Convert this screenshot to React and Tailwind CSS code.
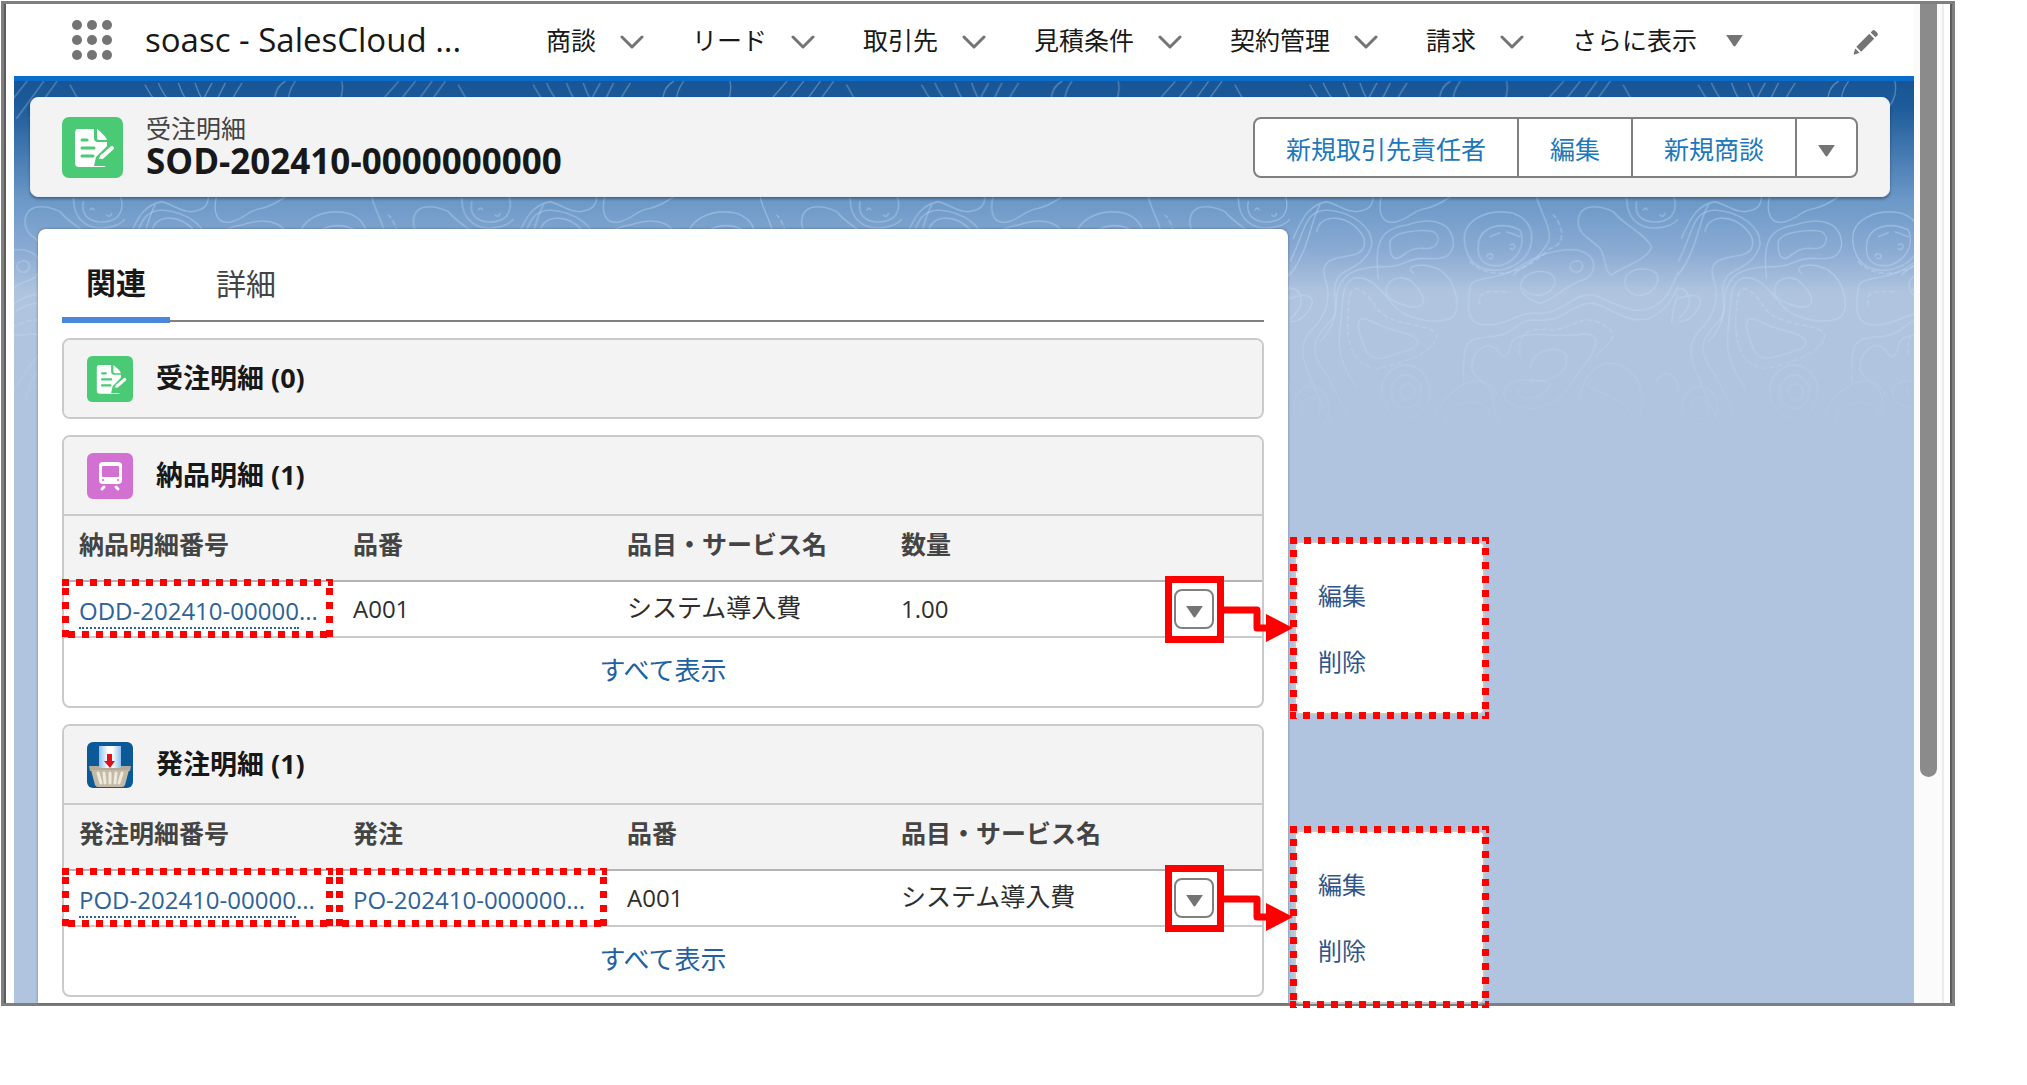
import React from "react";

const NAV_ITEMS = ["商談", "リード", "取引先", "見積条件", "契約管理", "請求"];

function Triangle({ className = "" }) {
  return (
    <svg viewBox="0 0 20 14" className={`h-[13px] w-[19px] shrink-0 fill-[#747474] ${className}`} aria-hidden="true">
      <path d="M1 1h18l-8 12q-1 1-2 0z" />
    </svg>
  );
}

function Chevron() {
  return (
    <svg viewBox="0 0 24 16" className="mt-1 h-4 w-6 fill-none stroke-[#747474]" strokeWidth="3" strokeLinecap="round" strokeLinejoin="round" aria-hidden="true">
      <path d="M2 3l10 10L22 3" />
    </svg>
  );
}

function Waffle() {
  return (
    <svg viewBox="0 0 42 42" className="size-[42px] fill-[#747474]" aria-hidden="true">
      {[6, 21, 36].map((y) => [6, 21, 36].map((x) => <circle key={`${x}-${y}`} cx={x} cy={y} r="5" />))}
    </svg>
  );
}

function Pencil() {
  return (
    <svg viewBox="0 0 28 28" className="size-7 fill-[#747474]" aria-hidden="true">
      <path d="M20.5 2.600q1.200-1.200 2.400 0l2.500 2.500q1.200 1.200 0 2.400l-1.800 1.800-4.900-4.900z" />
      <path d="M17.300 5.800l4.900 4.900L9.200 23.700l-4.900-4.900z" />
      <path d="M3.300 20.500l4.200 4.200-4.800 1.700q-1.300.3-1-1z" />
    </svg>
  );
}

function OrderIcon({ className }) {
  return (
    <svg viewBox="0 0 61 61" className={className} aria-hidden="true">
      <rect width="61" height="61" rx="7" fill="#4bca76" />
      <path
        fill="#fff"
        d="M16 12h16v9q0 4 4 4h9v4L34 40l-2 9h12q-1 1-3 1H17q-4 0-4-4V16q0-4 3-4z"
      />
      <path fill="#fff" d="M35 12q9 7 10 11h-8q-2 0-2-2z" />
      <path d="M20 23h5M20 31h12M20 39h11" stroke="#4bca76" strokeWidth="3" strokeLinecap="round" />
      <path d="M36 43l2-5 12-9 2 3-11 9z" fill="#fff" stroke="#4bca76" strokeWidth="1" />
      <path d="M40 40L50 31" stroke="#fff" strokeWidth="4" strokeLinecap="round" />
    </svg>
  );
}

function TrainIcon({ className }) {
  return (
    <svg viewBox="0 0 46 46" className={className} aria-hidden="true">
      <rect width="46" height="46" rx="6" fill="#d271d2" />
      <rect x="12" y="9" width="23" height="22" rx="4" fill="#fff" />
      <rect x="15" y="13" width="17" height="11" rx="1" fill="#d271d2" />
      <circle cx="16" cy="27" r="1" fill="#d271d2" />
      <circle cx="31" cy="27" r="1" fill="#d271d2" />
      <path d="M17 34l-2 2M29 34l2 2" stroke="#fff" strokeWidth="3" strokeLinecap="round" />
    </svg>
  );
}

function BasketIcon({ className }) {
  return (
    <svg viewBox="0 0 46 46" className={className} aria-hidden="true">
      <defs>
        <linearGradient id="sheet" x1="0" x2="1">
          <stop offset="0" stopColor="#8cc0ee" />
          <stop offset=".4" stopColor="#fff" />
          <stop offset=".6" stopColor="#fff" />
          <stop offset="1" stopColor="#8cc0ee" />
        </linearGradient>
      </defs>
      <rect width="46" height="46" rx="6" fill="#0b5a97" />
      <rect x="12" y="4" width="22" height="26" fill="url(#sheet)" />
      <path d="M20 12h5v7h3l-5 7-6-7h3z" fill="#e0101c" />
      <path d="M2 24h10v2h22v-2h10l-1 5H3z" fill="#b3aa98" />
      <path d="M4 28h38l-4 15q-1 2-3 2H11q-2 0-3-2z" fill="#c2b9a6" />
      <path d="M11 31l3 10M17 31l1 10M23 31v10M29 31l-1 10M35 31l-3 10" stroke="#efe9dc" strokeWidth="3" strokeLinecap="round" />
    </svg>
  );
}

/* Contour-line artwork that fades out below the page header. */
function Contours() {
  return (
    <svg className="pointer-events-none absolute inset-x-0 top-0 h-[400px] w-full" aria-hidden="true">
      <defs>
        <linearGradient id="fade" x1="0" y1="0" x2="0" y2="1">
          <stop offset="0" stopColor="#fff" stopOpacity=".7" />
          <stop offset=".3" stopColor="#fff" stopOpacity=".9" />
          <stop offset=".6" stopColor="#fff" stopOpacity=".9" />
          <stop offset=".92" stopColor="#fff" stopOpacity="0" />
        </linearGradient>
        <mask id="fadeMask">
          <rect width="100%" height="400" fill="url(#fade)" />
        </mask>
        <pattern id="contour" width="1165" height="1250" patternUnits="userSpaceOnUse" patternTransform="translate(1276 0) scale(0.3333)">
          <g fill="none" stroke="#c3dbf5" strokeOpacity=".5" strokeWidth="4" strokeLinecap="round" transform="translate(0 342)">
            <path d="M60-330q30 60 80 90M100-335q30 70 90 95M160-335q20 60 60 90M210-335q20 60 50 80M260-335q-30 60-70 120M300-335q-30 60-60 120M350-335q-40 60-60 120M450-250q-10-70 30-90M490-240q-10-60 20-100M620-250q40-40 30-90M740-250l80-90M790-240l80-100M840-230l80-110M880-230l80-110M1000-330q30 60 80 110" />
            <path d="M80 110C90 60 150 60 190 90C240 130 230 170 190 180C120 190 90 200 105 250C130 320 100 370 60 410C20 460 40 500 70 570C90 620 110 660 140 720" />
            <path d="M0 200C50 100 40 50 110 45C190 50 250 100 245 150C230 210 170 220 150 240C110 290 160 340 120 380C60 440 60 470 110 540C150 610 160 650 190 700" />
            <path d="M0 240C60 160 60 80 90 30M10 130C40 60 60 30 110 20C150 30 160 50 200 50C240 45 250 30 250 0" />
            <path d="M275 0C260 60 280 90 320 80C360 70 370 45 410 40C450 30 470 10 490 0" />
            <path d="M300 150C290 110 400 100 430 110C460 130 440 165 400 160C350 155 340 190 320 190C305 190 300 170 300 150" />
            <path d="M265 250C250 130 280 100 350 90C440 60 490 90 490 150C480 200 440 190 400 190C340 190 350 220 260 215C190 220 150 240 140 300C140 360 130 400 90 440" />
            <path d="M290 280C300 240 350 240 375 270C420 320 400 340 360 335C320 325 280 310 290 280" />
            <path d="M370 235C340 210 400 200 450 225C500 260 520 350 480 370C430 390 340 370 310 330C270 280 240 240 190 250C150 270 160 330 150 400C140 470 160 520 200 580" />
            <path d="M205 400C200 340 250 390 310 405C380 420 400 440 370 460C310 480 250 510 230 470C215 440 210 420 205 400" />
            <path strokeDasharray="14 10" d="M180 300C190 260 230 290 260 340C310 400 420 380 440 420C440 470 330 510 260 520C180 510 160 430 180 300M540 200C600 260 700 240 780 160C830 150 820 90 790 60" />
            <path d="M565 150C570 90 640 80 690 105C710 150 680 200 630 212C580 215 560 190 565 150" />
            <path d="M525 150C510 70 600 40 670 55C740 80 740 160 690 200C640 240 540 240 525 150" />
            <path d="M600 125l30-12M650 110l40 15M590 185q5-15 18-5q2 15-12 10M660 150q12-8 15 5q-5 15-15 5" />
            <path d="M540 280C540 240 620 260 680 220C740 180 800 160 860 165C930 180 920 240 880 255C830 265 790 320 750 325C700 310 680 280 700 250C730 220 800 220 795 265C780 310 720 310 700 280" />
            <path d="M540 280C530 340 530 390 590 390C660 390 680 350 740 355C820 360 850 290 910 300C970 320 1020 360 1080 340C1150 310 1150 250 1200 150" />
            <path d="M520 560C520 450 520 430 600 425C690 420 670 370 740 375C820 385 850 320 910 325C960 335 1010 390 1080 370C1160 330 1170 260 1220 120" />
            <path strokeDasharray="14 10" d="M690 480C680 400 730 400 790 405C850 400 880 350 940 390C1000 420 950 450 920 480M570 330C560 280 600 290 660 290" />
            <path d="M740 0C740 40 800 110 770 150C740 200 700 210 670 240" />
            <path d="M865 90C860 20 930 30 970 50C1000 90 1060 110 1085 155C1080 190 990 220 965 240C940 230 950 190 930 160C900 130 870 120 865 90" />
            <path d="M840 215C840 195 875 190 878 212C875 240 845 235 840 215M1005 265C1000 220 1070 210 1100 235C1115 270 1080 300 1045 302C1015 295 1007 280 1005 265" />
            <path d="M1040 20C1030 70 1070 85 1110 80C1150 75 1165 40 1150 0M1010 10C1010 80 1060 105 1110 98C1170 90 1190 50 1180 0M1060 45q8-12 12 0M1110 60q10 10 15-5" />
            <path d="M1145 385C1150 330 1160 280 1200 280M0 280C40 280 40 330 20 350C10 370-10 375-20 385M0 310C30 300 75 290 65 330C50 360 30 380 0 380" />
            <path d="M545 520C545 460 600 430 625 470C645 500 655 480 665 440C690 400 800 430 870 418C930 410 930 450 890 500C840 560 820 640 720 640C620 640 610 550 720 555C800 550 780 580 760 595C730 620 680 615 685 580" />
            <path d="M545 520C560 570 620 560 610 640C620 690 640 710 680 720M720 520C730 450 830 450 830 490C835 540 780 560 720 560" />
            <path d="M330 590a22 24 0 1 0 44 0a22 24 0 1 0-44 0M305 590a44 50 0 1 0 88 0a44 50 0 1 0-88 0M275 590a72 80 0 1 0 144 0a72 80 0 1 0-144 0M35 640a28 32 0 1 0 56 0a28 32 0 1 0-56 0M10 640a54 66 0 1 0 108 0a54 66 0 1 0-108 0" />
            <path d="M470 680C480 600 600 610 600 660C590 740 480 740 470 680M430 670C480 560 590 520 620 600M870 620C870 540 930 500 970 505C1040 520 1070 580 1050 660M890 570C960 610 1030 620 1030 690M1100 560C1120 520 1170 520 1165 620M1180 640a30 34 0 1 0 60 0" />
          </g>
        </pattern>
      </defs>
      <rect width="100%" height="400" fill="url(#contour)" mask="url(#fadeMask)" />
    </svg>
  );
}

/* Square-dashed red frame that marks a region. */
function DashedMark({ className }) {
  return (
    <svg className={`pointer-events-none absolute z-20 overflow-hidden ${className}`} aria-hidden="true">
      <rect width="100%" height="100%" fill="none" stroke="#ff0000" strokeWidth="14" strokeDasharray="7 7" />
    </svg>
  );
}

function RowAction() {
  return (
    <>
      <button type="button" aria-label="アクションを表示" className="ml-[14px] flex size-10 items-center justify-center rounded-lg border-2 border-[#808080] bg-white pt-1">
        <Triangle />
      </button>
      <span className="pointer-events-none absolute -top-[6px] left-[5px] z-20 h-[67px] w-[59px] border-[7px] border-[#ff0000]" />
      <svg viewBox="0 0 70 50" className="pointer-events-none absolute top-[18px] left-[63px] z-30 h-[50px] w-[70px]" aria-hidden="true">
        <path d="M0 10h34v18h12" fill="none" stroke="#ff0000" strokeWidth="7" strokeLinejoin="round" />
        <path d="M43 14l27 14-27 14z" fill="#ff0000" />
      </svg>
      <div className="absolute -top-[45px] left-[130px] z-20 h-[182px] w-[199px] p-1">
        <ul className="flex h-full flex-col rounded-md border-2 border-[#c9c9c9] bg-white px-[22px] pt-[20px] text-[24px] text-[#2f5589]">
          <li><button type="button" className="block h-[66px] w-full text-left">編集</button></li>
          <li><button type="button" className="block h-[66px] w-full text-left">削除</button></li>
        </ul>
        <DashedMark className="inset-0 size-full" />
      </div>
    </>
  );
}

function RecordLink({ children, underlined }) {
  return (
    <>
      <a href="#record" className="block pt-1 text-[#2d6399]">
        <span className={underlined ? "border-b-2 border-dotted border-[#2d6399]" : ""}>{children}</span>...
      </a>
      <DashedMark className="-top-[3px] -left-[2px] h-[59px] w-[271px]" />
    </>
  );
}

function RelatedList({ icon, title, columns, row }) {
  const head = "h-[68px] border-y-2 border-t-[#cacaca] border-b-[#b4b4b4] bg-[#f3f3f3]";
  return (
    <section className="rounded-lg border-2 border-[#cacaca] bg-white">
      <h2 className={`flex h-[77px] items-center gap-[23px] bg-[#f3f3f3] px-[23px] text-[27px] font-bold text-[#181818] ${columns ? "rounded-t-md" : "rounded-md"}`}>
        {icon}
        <span className="pb-[2px]">{title}</span>
      </h2>
      {columns && (
        <>
          <table className="w-full table-fixed border-separate border-spacing-0">
            <thead>
              <tr>
                {columns.map((c) => (
                  <th key={c} className={`${head} w-[274px] px-[15px] pb-2 text-left text-[25px] font-bold whitespace-nowrap text-[#444444]`}>{c}</th>
                ))}
                <th aria-label="アクション" className={head}></th>
              </tr>
            </thead>
            <tbody>
              <tr>
                {row.map((cell, i) => (
                  <td key={i} className="relative h-14 border-b-2 border-[#cacaca] px-[15px] text-[24px] whitespace-nowrap text-[#2e2e2e]">{cell}</td>
                ))}
                <td className="relative h-14 border-b-2 border-[#cacaca]"><RowAction /></td>
              </tr>
            </tbody>
          </table>
          <div className="flex h-[68px] items-center justify-center pb-1">
            <a href="#all" className="text-[26px] text-[#1f629f]">すべて表示</a>
          </div>
        </>
      )}
    </section>
  );
}

function ItemName({ children }) {
  return <span className="block pb-1 text-[25px]">{children}</span>;
}

export default function App() {
  const action = "flex items-center border-r-2 border-[#808080] px-[31px] pt-[3px]";
  return (
    <div lang="ja" className="min-h-screen bg-white pt-px pr-[72px] pl-px font-['Open_Sans','Noto_Sans_CJK_JP',sans-serif] leading-[36px]">
      <div className="flex border-[3px] border-[#7f7f7f]">
        <div className="w-[10px] border-l-2 border-[#5c5c5c] bg-white" />
        <div className="min-w-0 flex-1">
          <header className="flex h-[72px] items-center pr-[34px] pl-[57px] text-[25px] text-[#181818]">
            <button type="button" aria-label="アプリケーションランチャー"><Waffle /></button>
            <div className="ml-[32px] w-[401px] shrink-0 text-[33px] whitespace-nowrap">soasc - SalesCloud ...</div>
            <nav className="flex items-center gap-[48px] whitespace-nowrap">
              {NAV_ITEMS.map((item) => (
                <button type="button" key={item} className="flex items-center gap-6">
                  {item}
                  <Chevron />
                </button>
              ))}
              <button type="button" className="flex items-center gap-7">
                さらに表示
                <Triangle />
              </button>
            </nav>
            <button type="button" aria-label="編集" className="ml-auto pt-1"><Pencil /></button>
          </header>

          <main className="relative border-t-[5px] border-[#0a6ccb] bg-[#b0c4df] bg-[linear-gradient(180deg,#195594_0px,#1c5a99_24px,#6c99c8_120px,#8aabd3_170px,#b0c4df_212px)] px-4 pt-4 pb-0">
            <Contours />
            <div className="relative mr-2 flex h-[100px] items-center rounded-lg border border-[#e8eef6] bg-[#f3f3f3] pr-[31px] pl-[31px] shadow-[0_2px_3px_rgba(0,0,0,0.35)]">
              <OrderIcon className="size-[61px] shrink-0" />
              <div className="ml-[23px] pb-[5px] whitespace-nowrap">
                <p className="text-[25px] leading-[32px] text-[#444444]">受注明細</p>
                <h1 className="text-[35px] leading-[34px] font-bold text-[#181818]">SOD-202410-0000000000</h1>
              </div>
              <div className="ml-auto flex h-[61px] overflow-hidden rounded-lg border-2 border-[#808080] bg-white text-[25px] whitespace-nowrap text-[#1c78bb]">
                <button type="button" className={action}>新規取引先責任者</button>
                <button type="button" className={action}>編集</button>
                <button type="button" className={action}>新規商談</button>
                <button type="button" aria-label="その他のアクション" className="flex items-center px-[20px] pt-[6px]"><Triangle /></button>
              </div>
            </div>

            <div className="relative mt-8 grid grid-cols-[1250fr_610fr] pl-2">
              <div className="rounded-t-lg bg-white px-6 pb-[6px] shadow-[0_0_3px_rgba(0,0,0,0.35)]">
                <div role="tablist" className="flex h-[93px] items-end border-b-2 border-[#808080]">
                  <button type="button" role="tab" aria-selected="true" className="relative -mb-[3px] h-[68px] border-b-[6px] border-[#4a86dc] px-6 pb-[6px] text-[30px] font-bold text-[#181818]">関連</button>
                  <button type="button" role="tab" aria-selected="false" className="h-[65px] px-[46px] pb-[8px] text-[30px] text-[#444444]">詳細</button>
                </div>
                <div className="mt-4 flex flex-col gap-4">
                  <RelatedList icon={<OrderIcon className="size-[46px]" />} title="受注明細 (0)" />
                  <RelatedList
                    icon={<TrainIcon className="size-[46px]" />}
                    title="納品明細 (1)"
                    columns={["納品明細番号", "品番", "品目・サービス名", "数量"]}
                    row={[<RecordLink underlined>ODD-202410-00000</RecordLink>, "A001", <ItemName>システム導入費</ItemName>, "1.00"]}
                  />
                  <RelatedList
                    icon={<BasketIcon className="size-[46px]" />}
                    title="発注明細 (1)"
                    columns={["発注明細番号", "発注", "品番", "品目・サービス名"]}
                    row={[<RecordLink underlined>POD-202410-00000</RecordLink>, <RecordLink>PO-202410-000000</RecordLink>, "A001", <ItemName>システム導入費</ItemName>]}
                  />
                </div>
              </div>
            </div>
          </main>
        </div>
        <div className="w-[30px] border-r-2 border-[#ececec] bg-[#fbfbfb] pl-[6px]">
          <div className="h-[773px] w-[17px] rounded-b-full bg-[#8b8b8b]" />
        </div>
        <div className="w-[8px] border-r-2 border-[#5c5c5c] bg-white" />
      </div>
    </div>
  );
}
